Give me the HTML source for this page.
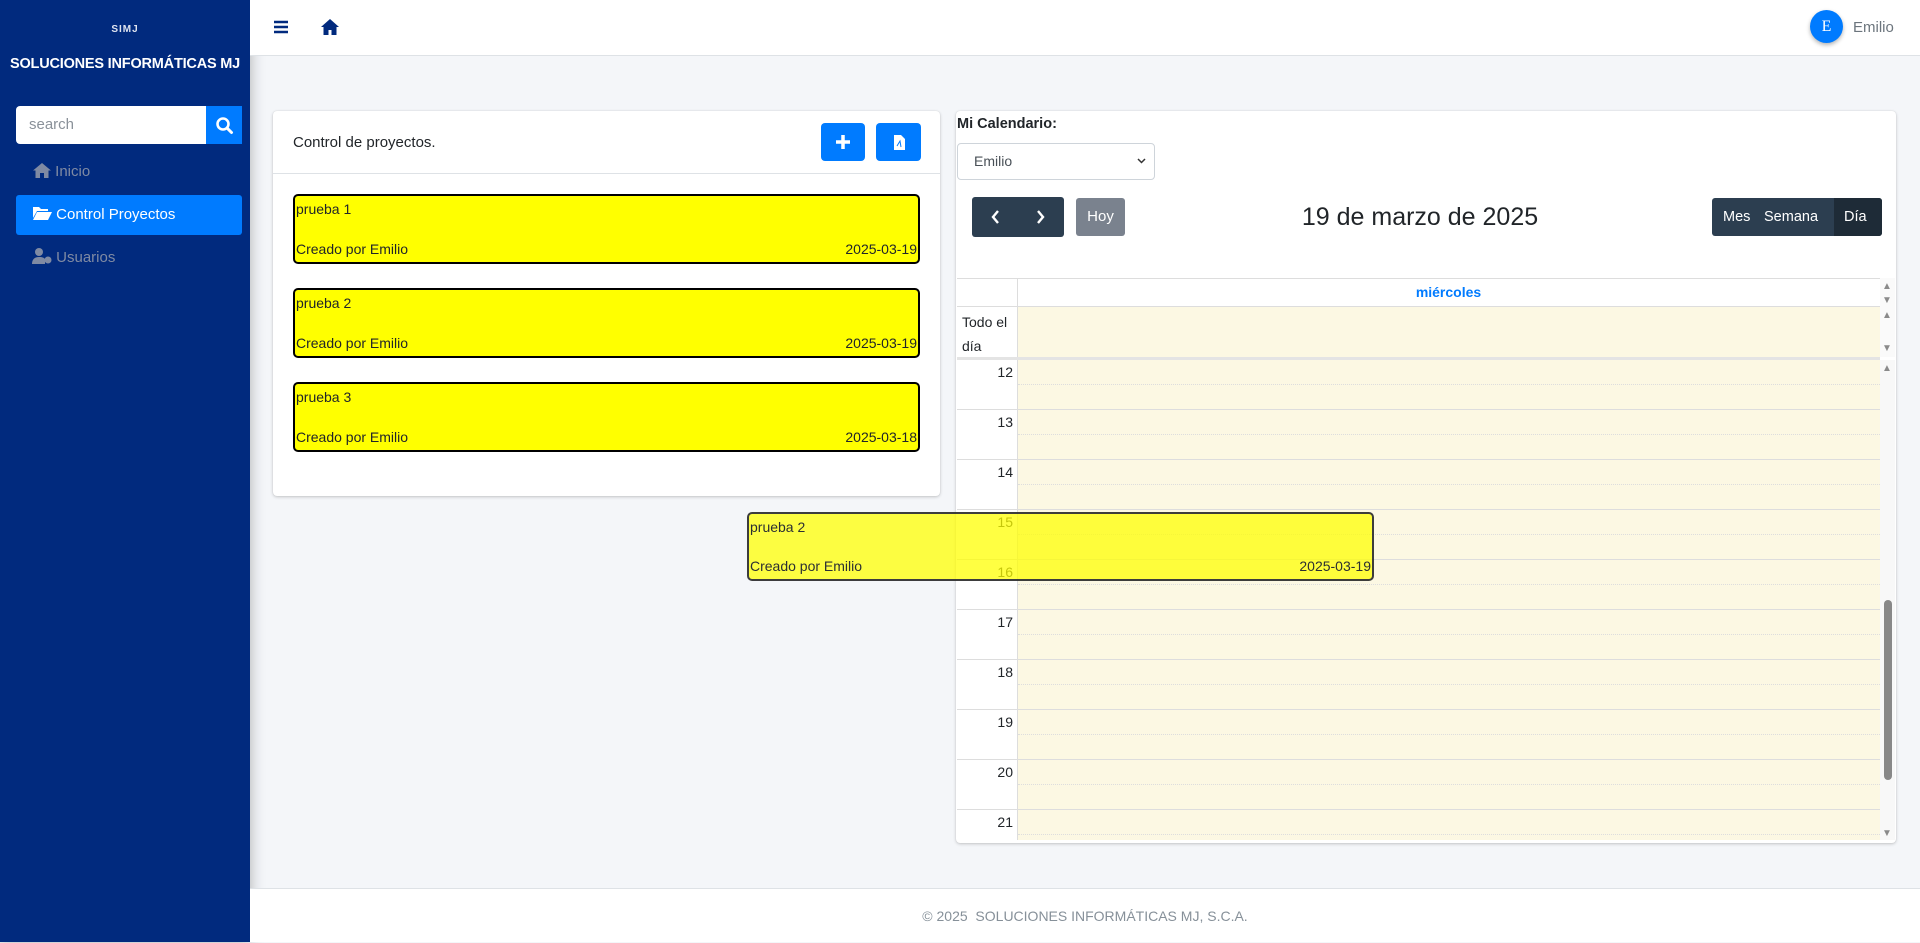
<!DOCTYPE html>
<html><head><meta charset="utf-8"><style>
*{box-sizing:border-box;margin:0;padding:0}
body{width:1920px;height:942px;overflow:hidden;background:#f4f6f9;font-family:"Liberation Sans",sans-serif;color:#212529;position:relative;font-size:15px}
.abs{position:absolute}
#side{left:0;top:0;width:250px;height:942px;background:#012a7e;box-shadow:0 0 14px rgba(0,0,0,.3)}
#top{left:250px;top:0;width:1670px;height:56px;background:#fff;border-bottom:1px solid #dee2e6}
#foot{left:250px;top:888px;width:1670px;height:54px;background:#fff;border-top:1px solid #dee2e6;text-align:center;line-height:54px;color:#869099;font-size:14px}
.card{background:#fff;border-radius:4px;box-shadow:0 0 1px rgba(0,0,0,.125),0 1px 3px rgba(0,0,0,.2)}
.item{position:absolute;left:293px;width:627px;height:70px;background:#ff0;border:2px solid #000;border-radius:5px;font-size:14px}
.item .t{position:absolute;left:1px;top:5px}
.item .c{position:absolute;left:1px;bottom:5px}
.item .d{position:absolute;right:1px;bottom:5px}
.btn{position:absolute;background:#007bff;border-radius:4px}
.hr{position:absolute;left:957px;width:923px;height:1px;background:#ddd}
.hh{position:absolute;left:957px;width:923px;height:0;border-top:1px dotted #ddd}
.lbl{position:absolute;left:957px;width:56px;text-align:right;font-size:14px}
.ar{position:absolute;left:1882px;color:#8a8a8a;font-size:10px;line-height:10px}
</style></head><body>
<div id="side" class="abs">
 <div class="abs" style="left:0;width:250px;top:24px;text-align:center;color:#dfe4f0;font-size:10px;font-weight:bold;letter-spacing:1px">SIMJ</div>
 <div class="abs" style="left:0;width:250px;top:56px;text-align:center;color:#fff;font-size:14.5px;font-weight:bold;letter-spacing:-0.2px;white-space:nowrap">SOLUCIONES INFORMÁTICAS MJ</div>
 <div class="abs" style="left:16px;top:106px;width:190px;height:38px;background:#fff;border-radius:4px 0 0 4px;color:#8a9199;font-size:15px;line-height:38px;padding-left:13px">search</div>
 <div class="abs" style="left:206px;top:106px;width:36px;height:38px;background:#007bff">
  <svg width="36" height="38" viewBox="0 0 36 38"><circle cx="17" cy="18" r="5.5" fill="none" stroke="#fff" stroke-width="2.6"/><path d="M21 22l4.5 4.5" stroke="#fff" stroke-width="3" stroke-linecap="round"/></svg></div>
 <div class="abs" style="left:33px;top:163px;color:#7f8aa3;font-size:15px"><svg width="18" height="15" viewBox="0 0 18 15" style="vertical-align:-2px"><path d="M9 0L0 7.5h2.5V15h4.5v-5h4v5h4.5V7.5H18z" fill="#7f8aa3"/></svg> Inicio</div>
 <div class="abs" style="left:16px;top:195px;width:226px;height:40px;background:#007bff;border-radius:3px;color:#fff;font-size:15px;line-height:40px;padding-left:17px"><svg width="19" height="14" viewBox="0 0 19 14" style="vertical-align:-1px"><path d="M0 1h6l2 2h7v2H4L0 12z M4 6h15l-4 8H0z" fill="#fff"/></svg> Control Proyectos</div>
 <div class="abs" style="left:32px;top:248px;color:#7f8aa3;font-size:15px"><svg width="20" height="16" viewBox="0 0 20 16" style="vertical-align:-2px"><circle cx="7" cy="4" r="4" fill="#7f8aa3"/><path d="M0 16c0-5 3-7 7-7s5 1 6 2v5z" fill="#7f8aa3"/><circle cx="16" cy="12" r="3.5" fill="#7f8aa3"/></svg> Usuarios</div>
</div>
<div id="top" class="abs">
 <svg class="abs" style="left:24px;top:20px" width="14" height="14" viewBox="0 0 14 14"><path d="M0 2h14M0 7h14M0 12h14" stroke="#012a7e" stroke-width="2.4"/></svg>
 <svg class="abs" style="left:71px;top:19px" width="18" height="16" viewBox="0 0 18 16"><path d="M9 0L0 8h2.5v8h5v-5h3v5h5V8H18z" fill="#012a7e"/></svg>
 <div class="abs" style="left:1560px;top:10px;width:33px;height:33px;border-radius:50%;background:#007bff;box-shadow:0 2px 4px rgba(0,0,0,.3);color:#fff;text-align:center;line-height:33px;font-family:'Liberation Serif',serif;font-size:16px">E</div>
 <div class="abs" style="left:1603px;top:19px;color:#6c757d;font-size:15px">Emilio</div>
</div>
<div class="abs card" style="left:273px;top:111px;width:667px;height:385px"></div>
<div class="abs" style="left:293px;top:134px;font-size:15px">Control de proyectos.</div>
<div class="abs" style="left:273px;top:173px;width:667px;height:1px;background:#dee2e6"></div>
<div class="btn" style="left:821px;top:123px;width:44px;height:38px"><svg width="44" height="38"><path d="M22 12v14M15 19h14" stroke="#fff" stroke-width="3.5"/></svg></div>
<div class="btn" style="left:876px;top:123px;width:45px;height:38px"><svg width="45" height="38"><path d="M18 12h7l4 4v11H18z" fill="#fff"/><path d="M21 23l3-5 1 6" stroke="#007bff" stroke-width="1" fill="none"/></svg></div>
<div class="item" style="top:194px"><span class="t">prueba 1</span><span class="c">Creado por Emilio</span><span class="d">2025-03-19</span></div>
<div class="item" style="top:288px"><span class="t">prueba 2</span><span class="c">Creado por Emilio</span><span class="d">2025-03-19</span></div>
<div class="item" style="top:382px"><span class="t">prueba 3</span><span class="c">Creado por Emilio</span><span class="d">2025-03-18</span></div>

<div class="abs card" style="left:956px;top:111px;width:940px;height:732px"></div>
<div class="abs" style="left:957px;top:116px;font-size:14.5px;font-weight:bold">Mi Calendario:</div>
<div class="abs" style="left:957px;top:143px;width:198px;height:37px;border:1px solid #ced4da;border-radius:4px;font-size:14px;line-height:35px;padding-left:16px;color:#495057">Emilio<svg class="abs" style="right:8px;top:14px" width="9" height="6"><path d="M1 1l3.5 3.5L8 1" stroke="#333" stroke-width="1.5" fill="none"/></svg></div>
<div class="abs" style="left:972px;top:197px;width:92px;height:40px;background:#2c3e50;border-radius:3px"><svg width="92" height="40"><path d="M26 14l-5 6 5 6M66 14l5 6-5 6" stroke="#fff" stroke-width="2.4" fill="none"/></svg></div>
<div class="abs" style="left:1076px;top:198px;width:49px;height:38px;background:#7a828e;border-radius:3px;color:#fff;text-align:center;line-height:38px;font-size:15px">Hoy</div>
<div class="abs" style="left:1200px;top:203px;width:440px;text-align:center;font-size:25px">19 de marzo de 2025</div>
<div class="abs" style="left:1712px;top:198px;width:170px;height:38px;background:#2c3e50;border-radius:3px;color:#fff;font-size:14.5px;line-height:38px">
 <span class="abs" style="left:11px">Mes</span><span class="abs" style="left:52px">Semana</span>
 <span class="abs" style="left:122px;width:48px;height:38px;background:#1e2b37;border-radius:0 3px 3px 0;padding-left:10px">Día</span></div>
<!-- calendar -->
<div class="abs" style="left:957px;top:278px;width:938px;height:1px;background:#ddd"></div>
<div class="abs" style="left:1017px;top:278px;width:1px;height:562px;background:#ddd"></div>
<div class="abs" style="left:1017px;top:284px;width:863px;text-align:center;color:#007bff;font-weight:bold;font-size:14px">miércoles</div>
<div class="abs" style="left:1018px;top:307px;width:862px;height:50px;background:#fcf8e3"></div>
<div class="hr" style="top:306px"></div>
<div class="abs" style="left:962px;top:310px;font-size:14px;line-height:24px">Todo el<br>día</div>
<div class="abs" style="left:957px;top:357px;width:923px;height:3px;background:#e4e4e4"></div>
<div class="abs" style="left:1018px;top:360px;width:862px;height:480px;background:#fcf8e3"></div>
<div class="hr" style="top:409px"></div><div class="hr" style="top:459px"></div><div class="hr" style="top:509px"></div><div class="hr" style="top:559px"></div><div class="hr" style="top:609px"></div><div class="hr" style="top:659px"></div><div class="hr" style="top:709px"></div><div class="hr" style="top:759px"></div><div class="hr" style="top:809px"></div>
<div class="hh" style="left:1018px;width:862px;top:384px"></div><div class="hh" style="left:1018px;width:862px;top:434px"></div><div class="hh" style="left:1018px;width:862px;top:484px"></div><div class="hh" style="left:1018px;width:862px;top:534px"></div><div class="hh" style="left:1018px;width:862px;top:584px"></div><div class="hh" style="left:1018px;width:862px;top:634px"></div><div class="hh" style="left:1018px;width:862px;top:684px"></div><div class="hh" style="left:1018px;width:862px;top:734px"></div><div class="hh" style="left:1018px;width:862px;top:784px"></div><div class="hh" style="left:1018px;width:862px;top:834px"></div>
<div class="lbl" style="top:364px">12</div><div class="lbl" style="top:414px">13</div><div class="lbl" style="top:464px">14</div><div class="lbl" style="top:514px">15</div><div class="lbl" style="top:564px">16</div><div class="lbl" style="top:614px">17</div><div class="lbl" style="top:664px">18</div><div class="lbl" style="top:714px">19</div><div class="lbl" style="top:764px">20</div><div class="lbl" style="top:814px">21</div>
<div class="abs" style="left:1880px;top:360px;width:15px;height:480px;background:#f8f8f8"></div>
<div class="abs" style="left:1884px;top:600px;width:8px;height:180px;background:#888;border-radius:4px"></div>
<div class="abs" style="left:1880px;top:278px;width:15px;height:79px;background:#fafafa"></div>
<div class="ar" style="top:282px">▲</div>
<div class="ar" style="top:296px">▼</div>
<div class="ar" style="top:311px">▲</div>
<div class="ar" style="top:344px">▼</div>
<div class="ar" style="top:364px">▲</div>
<div class="ar" style="top:829px">▼</div>
<!-- dragging -->
<div class="item" style="left:747px;top:512px;width:627px;height:69px;background:rgba(255,255,0,.78);border-color:#333;opacity:.95"><span class="t">prueba 2</span><span class="c">Creado por Emilio</span><span class="d">2025-03-19</span></div>
<div id="foot" class="abs">© 2025 &nbsp;SOLUCIONES INFORMÁTICAS MJ, S.C.A.</div>
</body></html>
